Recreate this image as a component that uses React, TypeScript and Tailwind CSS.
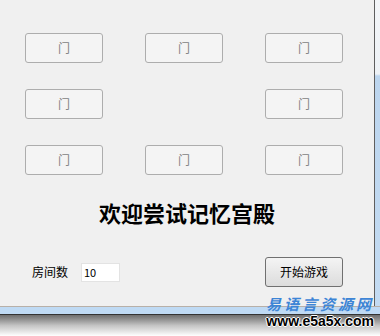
import React from "react";

const DoorButton: React.FC = () => (
  <button
    disabled
    className="h-[30px] w-[78px] rounded-[3px] border border-[#adadad] bg-[#f4f4f4] text-[12px] text-[#838383]"
  >
    门
  </button>
);

const App: React.FC = () => {
  const cjk = { fontFamily: '"Noto Sans CJK SC", "Noto Sans", sans-serif' };

  return (
    <div className="relative h-[336px] w-[380px] overflow-hidden bg-white" style={cjk}>
      <div className="flex">
        {/* client area */}
        <div className="flex h-[306px] w-[374px] flex-col bg-[#f0f0f0]">
          <div className="grid grid-cols-[78px_78px_78px] gap-x-[42px] gap-y-[26px] pl-[25px] pt-[33px]">
            <DoorButton />
            <DoorButton />
            <DoorButton />
            <DoorButton />
            <div />
            <DoorButton />
            <DoorButton />
            <DoorButton />
            <DoorButton />
          </div>

          <h1 className="mt-[22px] ml-[99px] text-[22px] font-bold leading-[30px] tracking-[0px] text-black">
            欢迎尝试记忆宫殿
          </h1>

          <div className="mt-[30px] flex items-center pl-[32px] pr-[31px]">
            <span className="text-[12px] text-black">房间数</span>
            <input
              defaultValue="10"
              className="ml-[13px] h-[19px] w-[39px] border border-[#e3e3e3] bg-white px-[2px] text-[11px] text-black outline-none"
            />
            <button className="ml-auto h-[30px] w-[78px] rounded-[3px] border border-[#707070] bg-gradient-to-b from-[#f4f4f4] to-[#dcdcdc] text-[12px] text-black">
              开始游戏
            </button>
          </div>
        </div>

        {/* right window frame */}
        <div className="h-[306px] w-px bg-[#5e5e5e]" />
        <div className="h-[306px] w-[5px] bg-[linear-gradient(to_bottom,#f3f5f8_0px,#eef2f6_74px,#bcd5ee_76px,#c3dbf2_306px)]" />
      </div>

      {/* bottom window frame */}
      <div className="h-px w-full bg-[#b8b0a8]" />
      <div className="h-[7px] w-full bg-[#bfdaf4]" />
      <div className="h-px w-full bg-[#333333]" />
      <div className="h-[21px] w-full bg-gradient-to-b from-[#6e6e6e] via-[#c4c4c4] to-white" />

      {/* watermark */}
      <div className="absolute left-[266px] top-[294px] flex flex-col items-end">
        <span className="text-[15px] font-bold italic leading-[19px] tracking-[3px] text-[#3d85d6]">
          易语言资源网
        </span>
        <span
          className="text-[14px] font-bold leading-[16px] text-black"
          style={{
            fontFamily: '"Liberation Sans", sans-serif',
            textShadow: "1px 0 #fff, -1px 0 #fff, 0 1px #fff, 0 -1px #fff",
          }}
        >
          www.e5a5x.com
        </span>
      </div>
    </div>
  );
};

export default App;
